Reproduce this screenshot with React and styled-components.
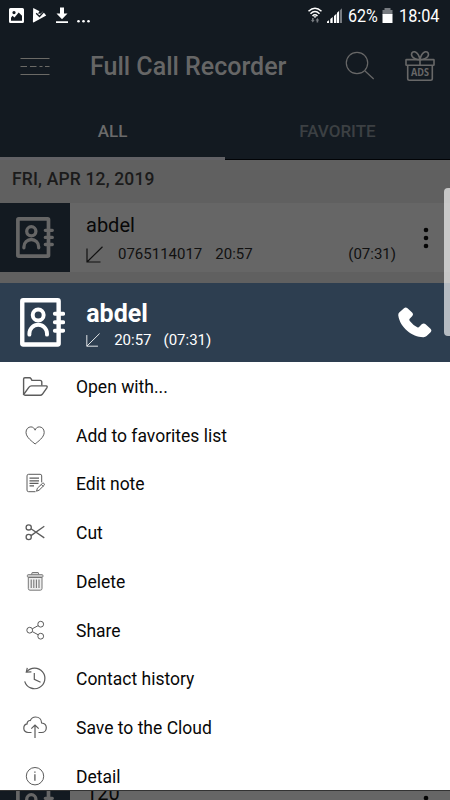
import React from 'react';
import styled, { createGlobalStyle } from 'styled-components';

const menuItems = [
  { label: 'Open with...', icon: 'folder' },
  { label: 'Add to favorites list', icon: 'heart' },
  { label: 'Edit note', icon: 'note' },
  { label: 'Cut', icon: 'cut' },
  { label: 'Delete', icon: 'trash' },
  { label: 'Share', icon: 'share' },
  { label: 'Contact history', icon: 'history' },
  { label: 'Save to the Cloud', icon: 'cloud' },
  { label: 'Detail', icon: 'info' },
];

const icons = {
  folder: (
    <g strokeWidth="1.4">
      <path d="M3.600 22.500V7q0-1.300 1.300-1.300h4.600q1 0 1.500 1l.9 1.700H20q1.800 0 1.800 1.800v3.200" />
      <path d="M3.600 22.500q.5.800 1.500.8h15.200q1.200 0 2-1l4.400-6.200q1.200-2-.6-2.200H11.500q-1.600 0-2.500 1.300L3.600 22.500z" />
    </g>
  ),
  heart: (
    <path d="M15.100 23C12.500 20.700 6 16.500 6 11.300 6 8 8.300 5.900 10.900 5.900c2.100 0 3.500 1.300 4.200 3.300.7-2 2.100-3.300 4.200-3.300 2.600 0 4.900 2.100 4.900 5.400C24.200 16.500 17.700 20.700 15.100 23z" />
  ),
  note: (
    <g>
      <path d="M15.500 22.700H8.600q-1.600 0-1.600-1.600V6.900q0-1.600 1.600-1.600h11.500q1.600 0 1.600 1.600v6.500" />
      <path d="M9.500 9.200h9.500M9.500 11.800h9.500M9.500 14.300h9M9.500 16.800h4.500" strokeWidth="1.2" />
      <path d="M16.500 22.200l.9-3 5-4.800q1-.6 1.700.2t0 1.700l-5 4.900zM21.300 15.500l1.900 1.900" />
    </g>
  ),
  cut: (
    <g strokeWidth="1.3">
      <circle cx="8.700" cy="9.400" r="2.600" />
      <circle cx="8.700" cy="19" r="2.600" />
      <path d="M11 10.700l13.300 9.200M11 17.600L24.300 8.200" />
    </g>
  ),
  trash: (
    <g stroke="#777">
      <path d="M11.500 7.500l.7-2h6l.7 2" fill="#ddd" />
      <rect x="7.400" y="7.700" width="15.500" height="2.500" rx=".7" fill="#ddd" />
      <path d="M8.300 10.500V21.500q0 1.700 1.700 1.700h10.300q1.700 0 1.700-1.700V10.500z" fill="#eee" />
      <path d="M11.200 12.500v8.500M13.800 12.500v8.500M16.400 12.500v8.500M19 12.500v8.500" strokeWidth="1.100" />
    </g>
  ),
  share: (
    <g>
      <circle cx="9.700" cy="14.200" r="2.900" />
      <circle cx="20.700" cy="8.200" r="2.900" />
      <circle cx="20.700" cy="20.200" r="2.900" />
      <path d="M12.300 12.800l5.900-3.200M12.300 15.600l5.900 3.200" />
    </g>
  ),
  history: (
    <g strokeWidth="1.200">
      <path d="M6.600 7.900A10.300 10.300 0 1 1 4.700 17.300" />
      <path d="M7.300 3.800L6.300 8.100l5.100-.3M14.300 9v6.300l6.300 3" />
    </g>
  ),
  cloud: (
    <g strokeWidth="1.200">
      <path d="M11.500 19.500H8.200C5.500 19.500 3.800 17.700 3.800 15.200c0-2.300 1.400-3.900 3.300-4.300C7 8.700 8.500 7.300 10.300 7.500c1-2.200 2.800-3.500 5.200-3.500 3.600 0 6 2.500 6.100 6 2.800.3 4.700 2.200 4.700 4.700 0 2.700-2 4.800-4.700 4.800h-3.100" />
      <path d="M15 25V12M11.300 15.700L15 12l3.700 3.700" />
    </g>
  ),
  info: (
    <g>
      <circle cx="15" cy="14.200" r="8.700" />
      <path d="M14.900 12.200v6.500M14.900 9.400v1.300" strokeWidth="1.300" />
    </g>
  ),
};

const ContactIcon = ({ width, color }) => (
  <Drawing width={width} height={(width * 41) / 38} viewBox="0 0 38 41" stroke={color} strokeLinecap="round">
    <rect x="1.900" y="1.900" width="30.600" height="37.200" rx=".8" strokeWidth="3.700" />
    <circle cx="15.300" cy="14.300" r="4.600" strokeWidth="3.300" />
    <path d="M7.900 30.800v-.9a7.400 7.400 0 0 1 14.800 0v.9" strokeWidth="3.300" />
    <path d="M29.300 13.300h7M29.300 20.400h7M29.300 27.500h7" strokeWidth="3.300" />
  </Drawing>
);

const IncomingArrow = ({ size, color }) => (
  <Drawing width={size} height={size} viewBox="0 0 17 17" stroke={color} strokeWidth="1.200">
    <path d="M1 2.500v13.500h13.500M1 16L16.500.7" />
  </Drawing>
);

const CallCard = ({ name, number, time, duration }) => (
  <Card>
    <Thumb>
      <ContactIcon width={38} color="#666" />
    </Thumb>
    <CardBody>
      <CardName>{name}</CardName>
      {number && (
        <CardMeta>
          <IncomingArrow size={17} color="#111" />
          <Number>{number}</Number>
          <span>{time}</span>
          <Duration>{duration}</Duration>
        </CardMeta>
      )}
    </CardBody>
    <Drawing width="6" height="22" viewBox="0 0 6 22" fill="#050505">
      <circle cx="3" cy="3" r="2.300" />
      <circle cx="3" cy="11" r="2.300" />
      <circle cx="3" cy="19" r="2.300" />
    </Drawing>
  </Card>
);

const StatusIcons = () => (
  <Drawing width="90" height="32" viewBox="0 0 90 32">
    <path fill="#fff" fillRule="evenodd" d="M10.500 8h12q1.500 0 1.500 1.500v12q0 1.500-1.500 1.500h-12Q9 23 9 21.500v-12Q9 8 10.500 8zM11 20.700h11v-5l-3.300-3.200-4.200 5-2-1.700-1.500 2zM14 11a1.600 1.600 0 1 0 .01 0z" />
    <path fill="#fff" d="M33.200 8l6.300 3.300-1.500 2.200 2.500.3 2.500-2.300 3.200 4-12.700 7q-.6 0-.6-.7z" />
    <path stroke="#131a21" strokeWidth="1.300" d="M36.200 13.200l3.300 3.300 5-5.500" />
    <path fill="#fff" d="M60 7.500h4v6h3.500L62 19.200l-5.500-5.700H60zM56 21.300h12V23H56z" />
    <circle cx="78.500" cy="21.200" r="1.300" fill="#fff" />
    <circle cx="83.500" cy="21.200" r="1.300" fill="#fff" />
    <circle cx="88.500" cy="21.200" r="1.300" fill="#fff" />
  </Drawing>
);

const App = () => {
  return (
    <Screen>
      <GlobalStyle />
      <StatusBar>
        <StatusIcons />
        <StatusRight>
          <Drawing width="36" height="32" viewBox="307 0 36 32">
            <g stroke="#fff" strokeWidth="1.500">
              <path d="M308.500 11.200q6.500-6 13 0M310.500 13.700q4.500-4.300 9 0M312.500 16q2.500-2.400 5 0" />
            </g>
            <path fill="#fff" d="M313.300 16.200h3.400L315 18z" />
            <path fill="#777b80" d="M311 20l1.800 2.500 1.800-2.500h-1v-2h-1.600v2zM315.600 20.500l1.800-2.500 1.800 2.500h-1v2h-1.600v-2z" />
            <path fill="#fff" d="M327 23v-1.500l2-1.300V23zM330.300 23v-4l2.400-2V23zM334 23v-7l2.400-2.300V23z" />
            <path fill="#fff" d="M337 23V12.800l2-1.700V23z" />
            <path fill="#777b80" d="M339.700 23V10.500l2.300-2.300V23z" />
          </Drawing>
          <Percent>62%</Percent>
          <Drawing width="11" height="32" viewBox="0 0 11 32">
            <path fill="#777b80" d="M2.500 8h6v2h2v4.500H.500V10h2z" />
            <path fill="#fff" d="M.500 14h10v9H.500z" />
          </Drawing>
          <Clock>18:04</Clock>
        </StatusRight>
      </StatusBar>
      <Toolbar>
        <Drawing width="30" height="19" viewBox="0 0 30 19" stroke="#6b6a66" strokeWidth="1.200">
          <path d="M.5 1.500h29M.5 9.500h6.500M10 9.500h6.500M19.500 9.500h3M25 9.500h4.500M.5 17.500h29" />
        </Drawing>
        <Title>Full Call Recorder</Title>
        <Drawing width="30" height="30" viewBox="0 0 30 30" stroke="#686868" strokeWidth="1.200">
          <circle cx="12" cy="12" r="10.700" />
          <path d="M19.800 19.800L28.700 28" />
        </Drawing>
        <Drawing width="30" height="31" viewBox="0 0 30 31" stroke="#686868" strokeWidth="1.600">
          <rect x="1" y="8.600" width="28" height="5.700" rx=".5" />
          <path d="M2.700 14.500v13q0 1.700 1.700 1.700h21.200q1.700 0 1.700-1.700V14.500M15 8.500v6" />
          <path d="M15 8.700C12 8.800 6.500 7 6.500 3.500c0-2.300 2.300-3.400 4.300-2.300C13.500 2.700 14.500 6 15 8.700zM15 8.700c3-.1 8.500-1.700 8.500-5.200 0-2.300-2.300-3.400-4.300-2.300C16.500 2.700 15.500 6 15 8.700z" />
          <AdsText x="6" y="25.300" textLength="18" lengthAdjust="spacingAndGlyphs">ADS</AdsText>
        </Drawing>
      </Toolbar>
      <Tabs>
        <Tab $active>ALL</Tab>
        <Tab>FAVORITE</Tab>
      </Tabs>
      <CallList>
        <DateHeader>FRI, APR 12, 2019</DateHeader>
        <CallCard name="abdel" number="0765114017" time="20:57" duration="(07:31)" />
        <ListGap />
        <CallCard name="120" />
      </CallList>
      <Sheet>
        <SheetHeader>
          <ContactIcon width={45.2} color="#fff" />
          <SheetInfo>
            <SheetName>abdel</SheetName>
            <SheetMeta>
              <IncomingArrow size={14} color="#e5e8ea" />
              <SheetTime>20:57</SheetTime>
              <span>(07:31)</span>
            </SheetMeta>
          </SheetInfo>
          <Drawing width="34" height="31" viewBox="0 0 34 31">
            <path fill="#fff" d="M1.200 5.500L6 1.200Q7.700-.2 9.500 1.300l4.600 4.200q1.700 1.700.2 3.600l-2.600 2.700q-.8 1 .1 2.200 3.300 4.300 7.500 6.200 1.200.5 2-.4l2.400-2.500q2-1.600 3.900-.1l4.900 4.500q1.700 1.800.1 3.600l-4 3.700q-1.200 1.100-3 1.200C14.500 30.500 2 20.500.3 8.500q-.2-1.900.9-3z" />
          </Drawing>
        </SheetHeader>
        <Menu>
          {menuItems.map(({ label, icon }) => (
            <MenuItem key={label}>
              <Drawing width="30" height="30" viewBox="0 0 30 30" stroke="#5c5c5c" strokeWidth="1">
                {icons[icon]}
              </Drawing>
              <MenuLabel>{label}</MenuLabel>
            </MenuItem>
          ))}
        </Menu>
      </Sheet>
      <EdgeHandle />
    </Screen>
  );
};

export default App;

const GlobalStyle = createGlobalStyle`
  body {
    margin: 0;
    font-family: Roboto, "Liberation Sans", sans-serif;
  }
  * {
    box-sizing: border-box;
  }
`;
const Drawing = styled.svg.attrs(({ fill }) => ({ fill: fill || 'none' }))`
  display: block;
  flex: none;
`;
const Screen = styled.div`
  position: relative;
  width: 450px;
  height: 800px;
  overflow: hidden;
  background: #606060;
`;
const StatusBar = styled.div`
  display: flex;
  justify-content: space-between;
  height: 32px;
  padding-right: 10px;
  background: #131a21;
  color: #fff;
  font-size: 18.7px;
  line-height: 33px;
`;
const StatusRight = styled.div`
  display: flex;
`;
const Percent = styled.span`
  width: 30px;
  margin: 0 4px 0 5px;
  transform: scaleX(0.86);
  transform-origin: left;
`;
const Clock = styled.span`
  width: 41px;
  margin-left: 6px;
  transform: scaleX(0.87);
  transform-origin: left;
`;
const Toolbar = styled.div`
  display: flex;
  align-items: center;
  height: 68px;
  padding: 0 15px 0 20px;
  background: #131a21;
`;
const Title = styled.h1`
  flex: 1;
  margin: 0 0 0 40px;
  padding-top: 2px;
  color: #666;
  font-size: 25px;
  font-weight: 500;
  line-height: 30px;

  & + svg {
    margin-right: 30px;
  }
`;
const AdsText = styled.text`
  fill: #686868;
  stroke: none;
  font: 700 10.5px "Open Sans", sans-serif;
`;
const Tabs = styled.div`
  display: flex;
  height: 60px;
  background: #131a21;
`;
const Tab = styled.div`
  flex: 1;
  border-bottom: ${({ $active }) => ($active ? '3px solid #626266' : '1px solid #020407')};
  color: ${({ $active }) => ($active ? '#6b6b6b' : '#3c4043')};
  font-size: 17px;
  font-weight: 500;
  line-height: 62px;
  text-align: center;
`;
const CallList = styled.div`
  display: flex;
  flex-direction: column;
`;
const DateHeader = styled.div`
  height: 43px;
  padding-left: 12px;
  color: #1b1b1b;
  font-size: 17.5px;
  font-weight: 500;
  letter-spacing: 0.16px;
  line-height: 38px;
`;
const Card = styled.div`
  display: flex;
  align-items: center;
  height: 69px;
  padding-right: 21px;
  background: #666;
`;
const ListGap = styled.div`
  height: 499px;
`;
const Thumb = styled.div`
  display: flex;
  align-items: center;
  width: 70px;
  height: 69px;
  padding-left: 16px;
  background: #131a21;
`;
const CardBody = styled.div`
  flex: 1;
  height: 69px;
  padding: 10px 27px 0 16px;
`;
const CardName = styled.div`
  color: #080808;
  font-size: 20px;
  line-height: 24px;
`;
const CardMeta = styled.div`
  display: flex;
  align-items: center;
  height: 18px;
  margin-top: 8px;
  color: #111;
  font-size: 15px;
  line-height: 18px;
`;
const Number = styled.span`
  margin: 0 13px 0 15px;
`;
const Duration = styled.span`
  margin-left: auto;
`;
const Sheet = styled.div`
  position: absolute;
  top: 283px;
  left: 0;
  display: flex;
  flex-direction: column;
  width: 450px;
  height: 508px;
  overflow: hidden;
  border-bottom: 1px solid #333;
  background: #fff;
`;
const SheetHeader = styled.div`
  display: flex;
  align-items: center;
  flex: none;
  height: 79px;
  padding: 0 18px 0 20px;
  background: #2d3e50;
`;
const SheetInfo = styled.div`
  flex: 1;
  padding: 4px 0 0 21px;
  color: #fff;
`;
const SheetName = styled.div`
  font-size: 25px;
  font-weight: 700;
  line-height: 30px;
`;
const SheetMeta = styled.div`
  display: flex;
  align-items: center;
  height: 22px;
  font-size: 15px;
`;
const SheetTime = styled.span`
  margin: 0 12px 0 14px;
`;
const Menu = styled.div`
  padding-top: 0.5px;
`;
const MenuItem = styled.div`
  display: flex;
  align-items: center;
  height: 48.75px;
  padding-left: 20px;
`;
const MenuLabel = styled.span`
  margin-left: 26px;
  color: #080808;
  font-size: 17.5px;
  line-height: 20px;
`;
const EdgeHandle = styled.div`
  position: absolute;
  top: 188px;
  right: 0;
  width: 6px;
  height: 148px;
  border-radius: 4px 0 0 4px;
  background: rgba(255, 255, 255, 0.65);
`;
